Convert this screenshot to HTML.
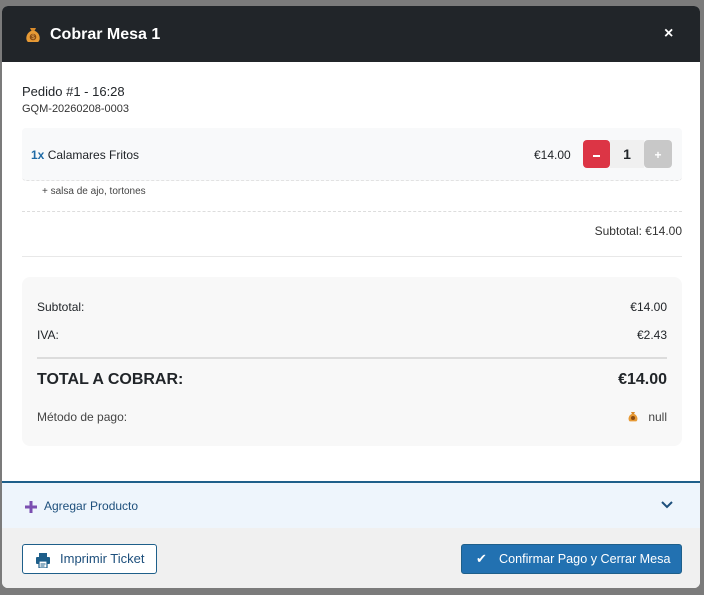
<!DOCTYPE html>
<html><head><meta charset="utf-8"><style>
*{margin:0;padding:0;box-sizing:border-box}
body{width:704px;height:595px;background:#7b7b7b;font-family:"Liberation Sans",sans-serif;position:relative;overflow:hidden;color:#212529}
.m{position:absolute;left:2px;top:6px;width:698px;height:582px;background:#fff;border-radius:6px;overflow:hidden}
.a{position:absolute;white-space:nowrap}
.hd{position:absolute;left:0;top:0;width:698px;height:56px;background:#212529}
.r{text-align:right}
</style></head><body>
<div class="m">
 <div class="hd">
  <svg class="a" style="left:22px;top:19px" width="18" height="18" viewBox="0 0 18 18"><path d="M6 3 L12 3 L10.5 6 L7.5 6Z" fill="#d98b2b"/><path d="M7 6 C2 8 1 15 4 17 L14 17 C17 15 16 8 11 6Z" fill="#e79a35"/><circle cx="9" cy="12" r="3.3" fill="#8a4b12"/><text x="9" y="14.2" font-size="6" fill="#f2b35a" text-anchor="middle" font-family="Liberation Sans">$</text></svg>
  <div class="a" style="left:48px;top:20px;color:#fff;font-size:16px;font-weight:bold">Cobrar Mesa 1</div>
  <div class="a" style="left:662px;top:19px;color:#fff;font-size:16px;font-weight:bold">×</div>
 </div>
 <div class="a" style="left:20px;top:78px;font-size:13px">Pedido #1 - 16:28</div>
 <div class="a" style="left:20px;top:97px;font-size:11px;color:#333">GQM-20260208-0003</div>
 <div class="a" style="left:20px;top:122px;width:660px;height:53px;background:#f8f9fa;border-bottom:1px dashed #e2e2e2;border-radius:4px"></div>
 <div class="a" style="left:29px;top:142px;font-size:12px"><b style="color:#1f6aa5">1x</b> Calamares Fritos</div>
 <div class="a" style="left:532px;top:142px;font-size:12px">€14.00</div>
 <div class="a" style="left:581px;top:134px;width:27px;height:28px;background:#dc3545;border-radius:4px"><div style="position:absolute;left:10px;top:15px;width:7px;height:2px;background:#fff"></div></div>
 <div class="a" style="left:608px;top:134px;width:34px;height:28px;background:#f0f0f0;font-size:14px;font-weight:bold;text-align:center;line-height:28px">1</div>
 <div class="a" style="left:642px;top:134px;width:28px;height:28px;background:#c8c8c8;border-radius:4px;color:#fff;text-align:center;line-height:30px;font-size:12px;font-weight:bold">+</div>
 <div class="a" style="left:40px;top:180px;font-size:10px;color:#444">+ salsa de ajo, tortones</div>
 <div class="a" style="left:20px;top:205px;width:660px;border-top:1px dashed #ddd"></div>
 <div class="a r" style="right:18px;top:218px;font-size:12px;color:#333">Subtotal: €14.00</div>
 <div class="a" style="left:20px;top:250px;width:660px;border-top:1px solid #e8e8e8"></div>
 <div class="a" style="left:20px;top:271px;width:660px;height:169px;background:#f8f8f8;border-radius:8px"></div>
 <div class="a" style="left:35px;top:294px;font-size:12px">Subtotal:</div>
 <div class="a r" style="right:33px;top:294px;font-size:12px">€14.00</div>
 <div class="a" style="left:35px;top:322px;font-size:12px">IVA:</div>
 <div class="a r" style="right:33px;top:322px;font-size:12px">€2.43</div>
 <div class="a" style="left:35px;top:351px;width:630px;height:2px;background:#dcdcdc"></div>
 <div class="a" style="left:35px;top:365px;font-size:16px;font-weight:bold">TOTAL A COBRAR:</div>
 <div class="a r" style="right:33px;top:365px;font-size:16px;font-weight:bold">€14.00</div>
 <div class="a" style="left:35px;top:404px;font-size:12px;color:#444">Método de pago:</div>
 <svg class="a" style="left:625px;top:403px" width="12" height="14" viewBox="0 0 18 18"><path d="M6 3 L12 3 L10.5 6 L7.5 6Z" fill="#d98b2b"/><path d="M7 6 C2 8 1 15 4 17 L14 17 C17 15 16 8 11 6Z" fill="#e79a35"/><circle cx="9" cy="12" r="3" fill="#8a4b12"/></svg>
 <div class="a r" style="right:33px;top:404px;font-size:12px;color:#444">null</div>
 <div class="a" style="left:0;top:475px;width:698px;height:47px;background:#eef5fc;border-top:2px solid #1e5f8a"></div>
 <svg class="a" style="left:22px;top:494px" width="14" height="14" viewBox="0 0 14 14"><path d="M7 1v12M1 7h12" stroke="#7b4fb0" stroke-width="3"/></svg>
 <div class="a" style="left:42px;top:493px;font-size:12px;color:#1d4f7c">Agregar Producto</div>
 <svg class="a" style="left:658px;top:494px" width="14" height="10" viewBox="0 0 14 10"><path d="M2 2 L7 7 L12 2" stroke="#1d4f7c" stroke-width="2" fill="none"/></svg>
 <div class="a" style="left:0;top:522px;width:698px;height:60px;background:#f0f0f0"></div>
 <div class="a" style="left:20px;top:538px;width:135px;height:30px;border:1px solid #1e5f8a;border-radius:3px;background:#fff"></div>
 <svg class="a" style="left:33px;top:546px" width="16" height="16" viewBox="0 0 16 16"><rect x="4" y="1" width="8" height="4" fill="#1e5f8a"/><rect x="1" y="5" width="14" height="7" rx="1" fill="#1e5f8a"/><rect x="4" y="9" width="8" height="7" fill="#fff" stroke="#1e5f8a" stroke-width="1.2"/><path d="M5.5 12h5M5.5 14h4" stroke="#1e5f8a"/></svg>
 <div class="a" style="left:58px;top:545px;font-size:13px;color:#1d4f7c">Imprimir Ticket</div>
 <div class="a" style="left:459px;top:538px;width:221px;height:30px;background:#2271b1;border:1px solid #1e5f8a;border-radius:3px"></div>
 <div class="a" style="left:474px;top:545px;font-size:13px;color:#fff">✔</div>
 <div class="a" style="left:497px;top:546px;font-size:12.6px;color:#fff">Confirmar Pago y Cerrar Mesa</div>
</div>
</body></html>
